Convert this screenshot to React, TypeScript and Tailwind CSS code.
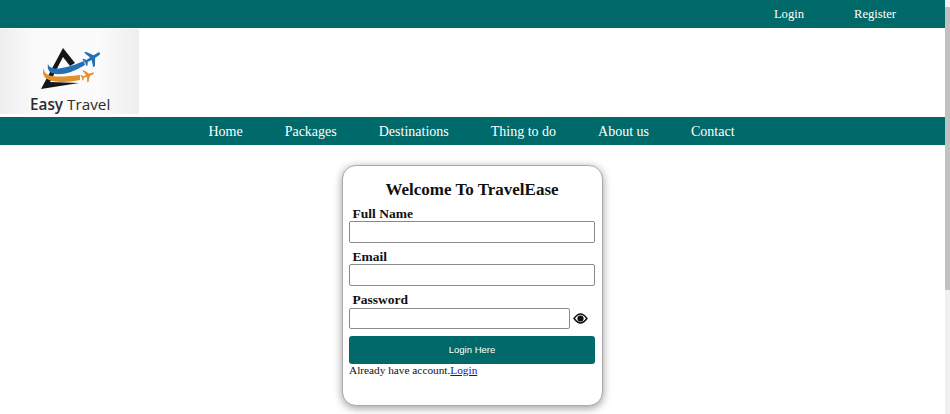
import React from "react";

const serif = "font-['Liberation_Serif',serif]";
const labelCls = "pl-[3.5px] text-[13.5px] leading-[15px] font-bold text-[#111]";
const plane =
  "M0 -10 C1.2 -10 1.5 -8 1.5 -6 L1.5 -3 L9 2 L9 4 L1.5 1.5 L1.2 6 L4 8 L4 9.5 L0 8.5 L-4 9.5 L-4 8 L-1.2 6 L-1.5 1.5 L-9 4 L-9 2 L-1.5 -3 L-1.5 -6 C-1.5 -8 -1.2 -10 0 -10 Z";

function Field({ label, top }: { label: string; top: string }) {
  return (
    <div className={top}>
      <div className={labelCls}>{label}</div>
      <div className="h-[21.5px] rounded-[2px] border border-[#8a8a8a] bg-white" />
    </div>
  );
}

function Logo() {
  return (
    <div className="relative h-[85px] w-[139px] bg-[linear-gradient(90deg,#eeeeee_0%,#fafafa_25%,#fbfbfb_70%,#eeeeee_100%)]">
      <svg width="139" height="68" viewBox="0 0 139 68">
        <path d="M41 60 L63 19 L75 34 L70 37 L63 28 L50 53 L79 54 L41 60 Z" fill="#15151a" />
        <path d="M44 39 C43 48 55 49 80 46 L80 51 C62 55 38 54 44 39 Z" fill="#e0902f" />
        <path d="M48 35 C50 41 60 42 84 32 L85 36 C66 48 45 49 48 35 Z" fill="#2470b4" />
        <path d={plane} fill="#2470b4" transform="translate(92 29) rotate(58) scale(0.95)" />
        <path d={plane} fill="#e0902f" transform="translate(87.5 46.5) rotate(68) scale(0.7)" />
      </svg>
      <div className="absolute left-[30px] top-[65px] whitespace-nowrap font-['Open_Sans',sans-serif] text-[15.3px] leading-[20px] text-[#2b2b33]">
        <span className="font-semibold">Easy</span> <span>Travel</span>
      </div>
    </div>
  );
}

export default function App() {
  return (
    <div className={`flex h-[414px] w-[950px] overflow-hidden bg-white ${serif}`}>
      <div className="w-[945px] shrink-0">
        <div className="flex h-[28px] items-center justify-end bg-[#006a6a] pr-[49px] text-[12.6px] text-white">
          <span>Login</span>
          <span className="ml-[50px]">Register</span>
        </div>
        <div className="h-[88.5px] pt-[0.5px]">
          <Logo />
        </div>
        <nav className="flex h-[28px] items-center justify-center gap-[42px] bg-[#006a6a] pr-[2px] pt-[1px] text-[14px] text-white">
          <span>Home</span>
          <span>Packages</span>
          <span>Destinations</span>
          <span>Thing to do</span>
          <span>About us</span>
          <span>Contact</span>
        </nav>
        <div className="flex justify-center pt-[20.5px]">
          <div className="h-[241px] w-[261px] rounded-[14px] border border-[#aaa] bg-white pr-[7px] pl-[6px] pt-[14px] shadow-[0_2px_8px_rgba(0,0,0,0.4)]">
            <h1 className="text-center text-[17px] leading-[20px] font-bold text-[#111]">Welcome To TravelEase</h1>
            <Field label="Full Name" top="mt-[6px]" />
            <Field label="Email" top="mt-[6.7px]" />
            <div className="mt-[6.7px]">
              <div className={labelCls}>Password</div>
              <div className="mt-[1px] flex items-center">
                <div className="h-[21px] w-[221px] rounded-[2px] border border-[#8a8a8a] bg-white" />
                <svg width="15" height="11" viewBox="0 0 16 12" className="ml-[3px]">
                  <path d="M1 6 C3.5 2.5 5.5 1.2 8 1.2 S12.5 2.5 15 6 C12.5 9.5 10.5 10.8 8 10.8 S3.5 9.5 1 6 Z" fill="none" stroke="#111" strokeWidth="1.6" />
                  <circle cx="8" cy="6" r="3.4" fill="#111" />
                </svg>
              </div>
            </div>
            <div className="mt-[7px] flex h-[28px] items-center justify-center rounded-[3px] bg-[#006a6a] font-['Liberation_Sans',sans-serif] text-[9.5px] text-white">
              Login Here
            </div>
            <div className="text-[11.3px] leading-[13px] text-[#111]">
              Already have account.<a href="#" className="text-[#1a0dab] underline">Login</a>
            </div>
          </div>
        </div>
      </div>
      <div className="flex h-[414px] w-[5px] flex-col bg-[#f1f1f1]">
        <div className="mt-[7px] h-[283px] bg-[#c1c1c1]" />
      </div>
    </div>
  );
}
